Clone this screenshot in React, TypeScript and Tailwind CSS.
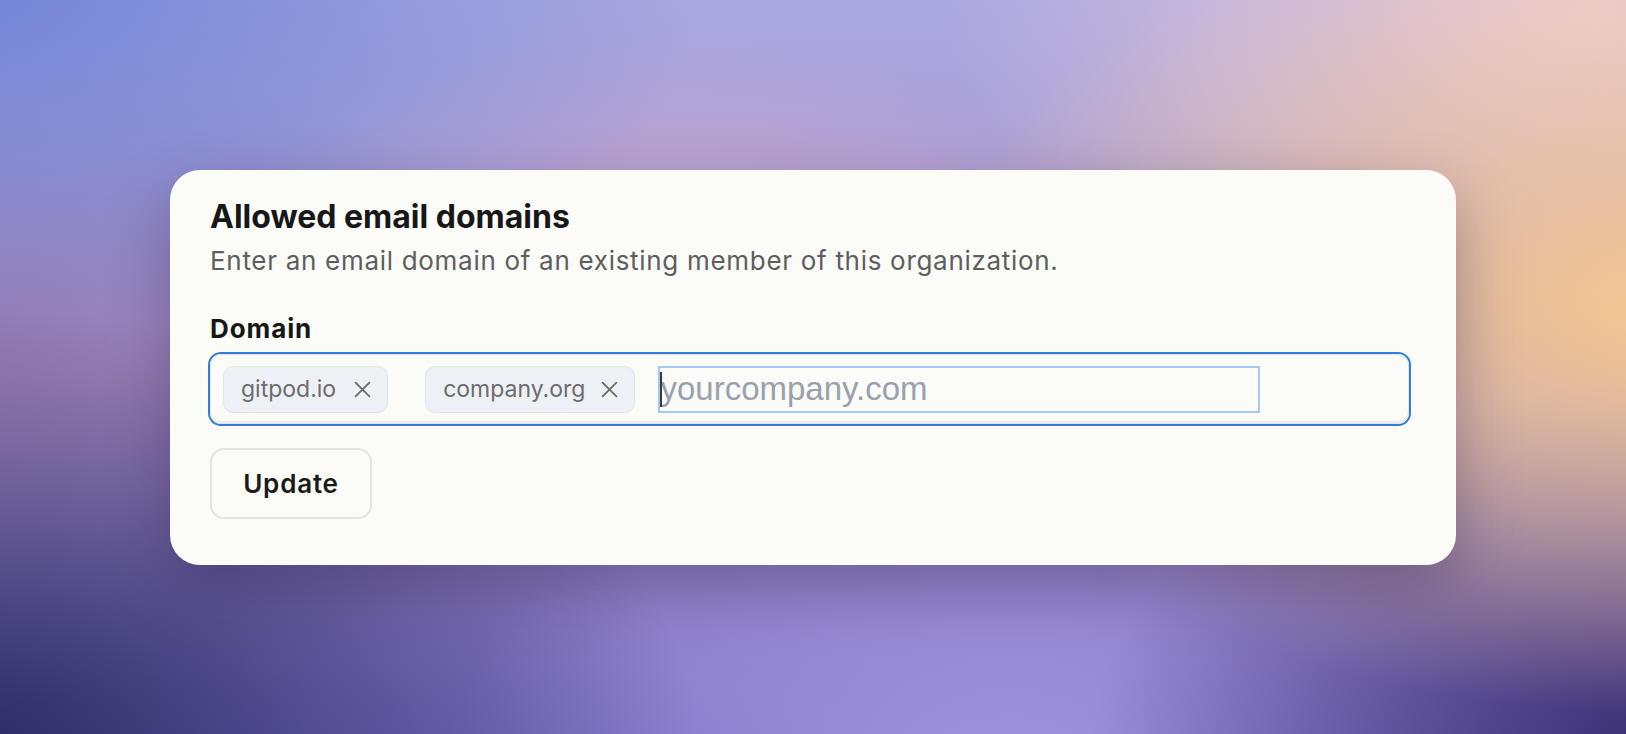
import React from 'react'

const bg =
  'bg-[radial-gradient(45%_55%_at_102%_42%,#f5c790_0%,rgba(245,199,144,0)_100%),radial-gradient(40%_45%_at_98%_2%,#ecccd8_0%,rgba(236,204,216,0)_100%),radial-gradient(45%_60%_at_-2%_102%,#2a2a62_0%,rgba(42,42,98,0)_100%),radial-gradient(35%_50%_at_102%_102%,#3b2f72_0%,rgba(59,47,114,0)_100%),radial-gradient(35%_45%_at_62%_105%,#a195dd_0%,rgba(161,149,221,0)_100%),radial-gradient(45%_55%_at_-2%_-2%,#7285d7_0%,rgba(114,133,215,0)_100%),radial-gradient(30%_40%_at_0%_45%,#9a7db0_0%,rgba(154,125,176,0)_100%),radial-gradient(30%_35%_at_42%_40%,#c8a6cc_0%,rgba(200,166,204,0)_100%),linear-gradient(180deg,#aaa8e0_0%,#a996c8_50%,#7f72c6_100%)]'

function Cross() {
  return (
    <svg width="17" height="17" viewBox="0 0 16 16" fill="none" className="shrink-0">
      <path d="M1.5 1.5l13 13M14.5 1.5l-13 13" stroke="#6c6a6a" strokeWidth="1.7" strokeLinecap="round" />
    </svg>
  )
}

function Chip({ label, gap }: { label: string; gap: string }) {
  return (
    <div
      className={`flex h-[47px] shrink-0 items-center rounded-[10px] border border-[#dfe4ea] bg-[#edf1f6] pl-[17px] pr-[16px] text-[23px] leading-none text-[#6d6b6b] ${gap}`}
    >
      <span>{label}</span>
      <Cross />
    </div>
  )
}

export default function App() {
  return (
    <div
      className={`h-[734px] w-[1626px] overflow-hidden pl-[170px] pt-[170px] ${bg}`}
      style={{ fontFamily: 'Inter, "Noto Sans", sans-serif' }}
    >
      <div className="h-[395px] w-[1286px] rounded-[30px] bg-[#fbfbf8] pl-[40px] pt-[28px] shadow-[0_24px_60px_rgba(40,24,70,0.35)]">
        <h1 className="text-[32px] font-bold leading-[38px] text-[#171717]">Allowed email domains</h1>
        <p className="mt-[10px] text-[26px] leading-[30px] tracking-[0.7px] text-[#5e5e5e]">
          Enter an email domain of an existing member of this organization.
        </p>

        <label className="mt-[38px] block text-[26px] font-bold leading-[30px] tracking-[0.9px] text-[#171717]">
          Domain
        </label>
        <div className="mt-[10px] flex h-[70px] w-[1199px] items-center rounded-[11px] border border-[#e4e4e0] pl-[12px] shadow-[inset_0_-2px_0_#ecece8] ring-2 ring-[#2f7fd4]">
          <Chip label="gitpod.io" gap="gap-[18px]" />
          <Chip label="company.org" gap="ml-[37px] gap-[16px]" />
          <div className="relative ml-[23px] flex h-[47px] w-[602px] items-center border-2 border-[#a5c7f4]">
            <span className="absolute left-0 top-[4px] h-[35px] w-[2px] bg-[#3a3a3a]" />
            <span
              className="text-[33px] leading-[36px] text-[#9aa1ad]"
              style={{ fontFamily: '"Liberation Sans", Arial, sans-serif' }}
            >
              yourcompany.com
            </span>
          </div>
        </div>

        <button className="mt-[24px] flex h-[71px] w-[162px] items-center justify-center rounded-[14px] border-2 border-[#e4e4e1] bg-[#fbfbf8] text-[26px] font-semibold tracking-[0.8px] text-[#1a1a1a]">
          Update
        </button>
      </div>
    </div>
  )
}
